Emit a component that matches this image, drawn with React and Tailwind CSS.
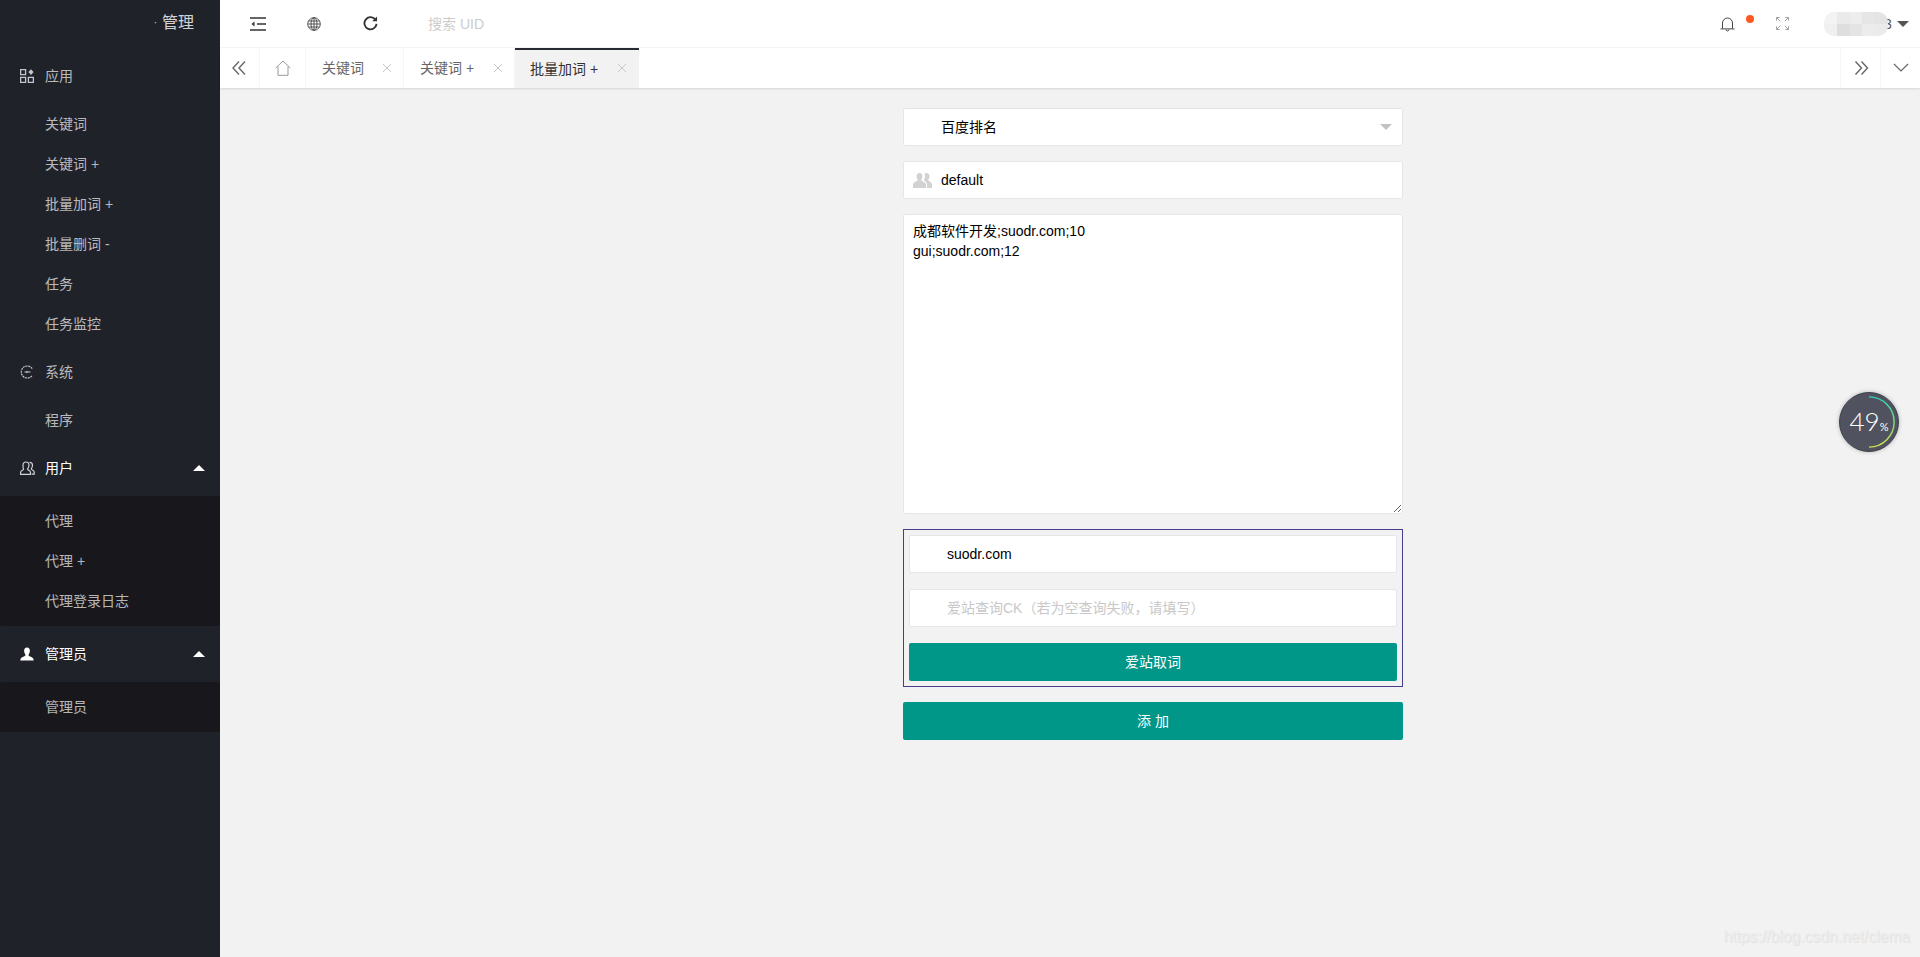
import React from "react";

const font = { fontFamily: '"Liberation Sans","Noto Sans CJK SC",sans-serif' };

const Up = () => (
  <span className="absolute left-[193px] top-1/2 -mt-[3px] w-0 h-0 border-x-[6px] border-x-transparent border-b-[6px] border-b-white" />
);

function Group({ icon, label, open, children, dark }) {
  return (
    <div>
      <div className={`relative h-14 flex items-center pl-[45px] text-sm ${open ? "text-white" : "text-white/70"}`}>
        <span className="absolute left-[20px] top-[21px] w-[14px] h-[14px]">{icon}</span>
        <span>{label}</span>
        {open && <Up />}
      </div>
      <div className={dark ? "bg-[#18181c] py-[5px] rounded-[2px]" : ""}>{children}</div>
    </div>
  );
}
const Item = ({ children }) => <div className="h-10 flex items-center pl-[45px] text-sm text-white/70">{children}</div>;

const AppsIcon = () => (
  <svg viewBox="0 0 14 14" className="w-[14px] h-[14px]" fill="none" stroke="#c4c6cb" strokeWidth="1.300">
    <rect x="0.6" y="0.6" width="5" height="5" />
    <rect x="0.6" y="8.4" width="5" height="5" />
    <rect x="8.4" y="8.4" width="5" height="5" />
    <path d="M11 .3l2.600 2.800L11 5.900 8.400 3.100z" fill="#c4c6cb" stroke="none" />
  </svg>
);
const SysIcon = () => (
  <svg viewBox="0 0 14 14" className="w-[14px] h-[14px]" fill="none" stroke="#c4c6cb" strokeWidth="1.200">
    <path d="M12.200 3.600A6 6 0 1 0 12.200 10.400" strokeDasharray="2 .7" />
    <path d="M4.500 7h6M7 5.900v2.200" />
  </svg>
);
const UserOutline = () => (
  <svg viewBox="0 0 15 14" className="w-[15px] h-[14px]" fill="none" stroke="#d0d2d6" strokeWidth="1.200">
    <path d="M6 1c2 0 3 1.400 3 3.200S8 7.500 7.500 8.200c.2 1 3 1.300 3 3.100v2H.6v-2c0-1.800 2.900-2.100 3-3.100C3 7.500 3 6 3 4.200S4 1 6 1z" />
    <path d="M9.500 1.300c2 0 3 1.300 3 3s-.8 3-1.300 3.700c.2 1 3 1.300 3 3.100v2h-2.500" />
  </svg>
);
const UserSolid = () => (
  <svg viewBox="0 0 14 14" className="w-[14px] h-[14px]" fill="#fff">
    <path d="M7 .5c1.900 0 2.900 1.400 2.900 3.200 0 1.500-.7 3-1.300 3.700-.2.900.3 1.500 2.100 2.300 1.600.7 3 1.100 3 3.800H.3c0-2.700 1.400-3.100 3-3.800 1.800-.8 2.300-1.400 2.100-2.300C4.800 6.700 4.100 5.200 4.100 3.700 4.100 1.900 5.100.5 7 .5z" />
  </svg>
);
const Close = () => (
  <svg viewBox="0 0 10 10" className="w-[10px] h-[10px]" stroke="#c8c8c8" strokeWidth="1" fill="none">
    <path d="M1 1l8 8M9 1L1 9" />
  </svg>
);

function Tab({ label, width, active, closeRight }) {
  return (
    <div
      style={{ width }}
      className={`relative h-full flex items-center text-sm shrink-0 ${active ? "pl-[15px] bg-[#f2f2f2] text-[#333] border-t-2 border-t-[#292b34]" : "pl-4 text-[#666] border-r border-r-[#f6f6f6]"}`}
    >
      <span>{label}</span>
      <span className={`absolute ${closeRight} ${active ? "top-[13px]" : "top-[15px]"}`}><Close /></span>
    </div>
  );
}

const inputCls = "block w-full h-[38px] bg-white border border-[#e6e6e6] rounded-[2px] text-sm text-[#000] outline-none placeholder:text-[#c8c8c8]";

export default function App() {
  return (
    <div style={font} className="relative w-full h-[957px] flex overflow-hidden bg-[#f2f2f2]">
      <aside className="w-[220px] shrink-0 bg-[#20222a]">
        <div className="h-12 flex items-center justify-end pr-[26px] text-base text-white/80 pb-[3px]">
          <span className="text-[10px] mr-[5px]">·</span>管理
        </div>
        <Group icon={<AppsIcon />} label="应用">
          <Item>关键词</Item>
          <Item>关键词 +</Item>
          <Item>批量加词 +</Item>
          <Item>批量删词 -</Item>
          <Item>任务</Item>
          <Item>任务监控</Item>
        </Group>
        <Group icon={<SysIcon />} label="系统">
          <Item>程序</Item>
        </Group>
        <Group icon={<UserOutline />} label="用户" open dark>
          <Item>代理</Item>
          <Item>代理 +</Item>
          <Item>代理登录日志</Item>
        </Group>
        <Group icon={<UserSolid />} label="管理员" open dark>
          <Item>管理员</Item>
        </Group>
      </aside>

      <div className="flex-1 min-w-0 flex flex-col">
        <header className="h-12 shrink-0 bg-white border-b border-b-[#f6f6f6] flex items-center pl-[10px]">
          <span className="w-14 flex justify-center">
            <svg viewBox="0 0 16 14" className="w-4 h-[14px]" fill="none" stroke="#333" strokeWidth="1.500">
              <path d="M0 1h16M7 7h9M0 13h16" />
              <path d="M4.500 4.600L1.500 7l3 2.400z" fill="#333" stroke="none" />
            </svg>
          </span>
          <span className="w-14 flex justify-center">
            <svg viewBox="0 0 14 14" className="w-[14px] h-[14px]" fill="none" stroke="#444" strokeWidth="0.9">
              <circle cx="7" cy="7" r="6.300" />
              <ellipse cx="7" cy="7" rx="3" ry="6.300" />
              <path d="M7 .7v12.600M.7 7h12.600M1.500 4h11M1.500 10h11" />
            </svg>
          </span>
          <span className="w-14 flex justify-center">
            <svg viewBox="0 0 16 16" className="w-[15px] h-[15px]" fill="none" stroke="#333" strokeWidth="2">
              <path d="M13.500 4.200A6.500 6.500 0 1 0 14.500 8.500" />
              <path d="M15 .5v5.200H9.800z" fill="#333" stroke="none" />
            </svg>
          </span>
          <span className="ml-[30px] text-sm text-[#ccc]">搜索 UID</span>
          <div className="ml-auto flex items-center h-full">
            <span className="relative w-4 flex justify-center">
              <svg viewBox="0 0 15 16" className="w-[15px] h-4" fill="none" stroke="#444" strokeWidth="1">
                <path d="M2.500 12.500V7a5 5 0 0 1 10 0v5.500M.5 12.900h14M6 13.500c.2 2 2.800 2 3 0" />
              </svg>
              <span className="absolute left-[27px] -top-[1px] w-2 h-2 rounded-full bg-[#ff5722]" />
            </span>
            <span className="ml-[41px]">
              <svg viewBox="0 0 14 14" className="w-[13px] h-[13px]" fill="none" stroke="#999" strokeWidth="1">
                <path d="M.5 4V.5H4M.7.7l3.800 3.800M10 .5h3.500V4M13.300.7L9.500 4.500M.5 10v3.500H4M.7 13.300l3.800-3.800M13.500 10v3.500H10M13.300 13.300L9.500 9.500" />
              </svg>
            </span>
            <span className="relative z-10 ml-[35px] w-16 h-6 rounded-[10px] grid grid-cols-5 grid-rows-2 overflow-hidden blur-[0.6px]">
              <i className="bg-[#f3f3f3]" /><i className="bg-[#eaeaea]" /><i className="bg-[#ededed]" /><i className="bg-[#e6e6e6]" /><i className="bg-[#e4e4e4]" />
              <i className="bg-[#f0f0f0]" /><i className="bg-[#dedede]" /><i className="bg-[#e4e4e4]" /><i className="bg-[#ececec]" /><i className="bg-[#ebebeb]" />
            </span>
            <span className="-ml-[4px] text-sm text-[#555] w-[13px]">3</span>
            <span className="w-0 h-0 border-x-[6px] border-x-transparent border-t-[6px] border-t-[#555] mr-[11px]" />
          </div>
        </header>

        <nav className="h-10 shrink-0 bg-white shadow-[0_1px_2px_rgba(0,0,0,.12)] flex items-center relative">
          <span className="w-10 h-full flex items-center justify-center border-r border-r-[#f6f6f6] shrink-0">
            <svg viewBox="0 0 16 14" className="w-[17px] h-[14px]" fill="none" stroke="#666" strokeWidth="1.400">
              <path d="M7.500 .5L1.500 7l6 6.500M13.500 .5L7.500 7l6 6.500" />
            </svg>
          </span>
          <span className="w-[46px] h-full flex items-center justify-center border-r border-r-[#f6f6f6] shrink-0">
            <svg viewBox="0 0 16 16" className="w-4 h-4" fill="none" stroke="#999" strokeWidth="1">
              <path d="M.7 8L8 1l7.300 7M3 6.500v8.800h10V6.500" />
            </svg>
          </span>
          <Tab label="关键词" width={98} closeRight="right-[11px]" />
          <Tab label="关键词 +" width={111} closeRight="right-[11px]" />
          <Tab label="批量加词 +" width={124} active closeRight="right-[12px]" />
          <div className="ml-auto flex h-full">
            <span className="w-10 h-full flex items-center justify-center border-l border-l-[#f6f6f6]">
              <svg viewBox="0 0 16 14" className="w-[16px] h-[14px]" fill="none" stroke="#666" strokeWidth="1.400">
                <path d="M2.500 .5l6 6.500-6 6.500M8.500 .5l6 6.500-6 6.500" />
              </svg>
            </span>
            <span className="w-10 h-full flex items-center justify-center border-l border-l-[#f6f6f6]">
              <svg viewBox="0 0 16 10" className="w-[16px] h-[10px]" fill="none" stroke="#666" strokeWidth="1.200">
                <path d="M1 1l7 7 7-7" />
              </svg>
            </span>
          </div>
        </nav>

        <main className="flex-1 pl-[683px] pt-5">
          <div className="w-[500px] flex flex-col gap-[15px]">
            <div className="relative h-[38px] bg-white border border-[#e6e6e6] rounded-[2px] flex items-center pl-[37px] text-sm text-black">
              百度排名
              <span className="absolute right-[10px] top-[15px] w-0 h-0 border-x-[6px] border-x-transparent border-t-[6px] border-t-[#c2c2c2]" />
            </div>
            <div className="relative">
              <input readOnly value="default" className={`${inputCls} pl-[37px]`} />
              <svg viewBox="0 0 20 15" className="absolute left-[10px] top-[12px] w-5 h-[15px]" fill="#d2d2d2">
                <path d="M6.500 0c2 0 3 1.400 3 3.200 0 1.500-.8 3-1.400 3.600-.2 1.200 5 2.200 5 5.200V15H0v-3c0-3 5-4 4.900-5.200C4.300 6.200 3.500 4.700 3.500 3.200 3.500 1.400 4.500 0 6.500 0z" />
                <path d="M13.500 0c2 0 3 1.400 3 3.200 0 1.500-.8 3-1.400 3.600-.2 1.200 3.900 2.200 3.900 5.200v3h-4.900v-3c0-2.500-2.400-4-3.400-5 .8-1 1.300-2.400 1.300-3.800 0-1-.2-1.700-.6-2.400.5-.5 1.300-.8 2.100-.8z" />
              </svg>
            </div>
            <textarea
              readOnly
              defaultValue={"成都软件开发;suodr.com;10\ngui;suodr.com;12"}
              className="block w-full h-[300px] bg-white border border-[#e6e6e6] rounded-[2px] px-[9px] py-[6px] text-sm leading-5 text-black outline-none"
            />
            <div className="border border-[#483d8b] p-[5px] flex flex-col gap-[16px]">
              <input readOnly value="suodr.com" className={`${inputCls} pl-[37px]`} />
              <input readOnly placeholder="爱站查询CK（若为空查询失败，请填写）" className={`${inputCls} pl-[37px]`} />
              <button className="h-[38px] rounded-[2px] bg-[#009688] text-white text-sm">爱站取词</button>
            </div>
            <button className="h-[38px] rounded-[2px] bg-[#009688] text-white text-sm">添 加</button>
          </div>
        </main>
      </div>

      <div className="absolute left-[1839px] top-[392px] w-[60px] h-[60px] rounded-full bg-[#50535f] border border-[#3f424c] shadow-[0_0_4px_rgba(0,0,0,.25)] flex items-baseline justify-center pt-[13px] text-white font-light" style={{ fontFamily: 'Lato,"Liberation Sans",sans-serif' }}>
        <span className="text-[26px] leading-[30px] font-light">49</span>
        <span className="text-[11px] leading-none font-normal">%</span>
        <svg viewBox="0 0 60 60" className="absolute left-0 top-0 w-[58px] h-[58px]" fill="none">
          <defs>
            <linearGradient id="arcg" x1="0" y1="0" x2="0" y2="1">
              <stop offset="0" stopColor="#2fd6b4" />
              <stop offset="1" stopColor="#cfe04e" />
            </linearGradient>
          </defs>
          <path d="M30 4a26 26 0 0 1 0 52" stroke="url(#arcg)" strokeWidth="1.500" />
        </svg>
      </div>

      <div className="absolute right-[10px] bottom-[8px] text-[15.7px] text-[#ececec] [text-shadow:1px_1px_1px_rgba(0,0,0,.08)]">
        https://blog.csdn.net/clema
      </div>
    </div>
  );
}
